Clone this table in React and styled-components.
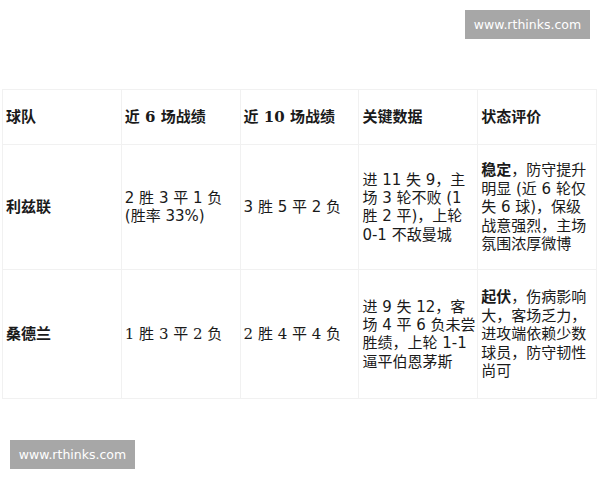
import React from "react";
import styled, { createGlobalStyle } from "styled-components";

const Global = createGlobalStyle`
  html, body { margin: 0; padding: 0; background: #fff; }
  body {
    width: 600px; height: 480px; overflow: hidden;
    font-family: "DejaVu Sans", "Noto Sans CJK SC", sans-serif;
    color: #1a1a1a;
  }
`;

const Page = styled.div`
  position: relative;
  width: 600px;
  height: 480px;
  padding: 89px 0 0 2px;
  box-sizing: border-box;
`;

const Table = styled.table`
  width: 595px;
  table-layout: fixed;
  border-collapse: collapse;
  font-size: 15px;
  line-height: 18.4px;
`;

const HeadCell = styled.th`
  text-align: left;
  font-weight: 700;
  font-family: "DejaVu Serif", "Noto Sans CJK SC", serif;
  padding: 18px 1px 18px 3px;
  height: 18px;
  border: 1px solid #f1f1f1;
  vertical-align: middle;
`;

const Cell = styled.td`
  padding: 16px 0 16px 3px;
  border: 1px solid #f1f1f1;
  vertical-align: middle;
  font-family: ${p => p.$serif
    ? `"DejaVu Serif", "Noto Sans CJK SC", serif`
    : `"DejaVu Sans", "Noto Sans CJK SC", sans-serif`};
  font-weight: ${p => (p.$bold ? 700 : 400)};
  height: ${p => p.$h || "auto"};
`;

const Strong = styled.b`
  font-weight: 700;
`;

const NoBreak = styled.span`
  white-space: nowrap;
`;

const Watermark = styled.div`
  position: absolute;
  width: 125px;
  height: 29px;
  background: #a7a7a7;
  color: #fff;
  font-family: "DejaVu Sans", sans-serif;
  font-size: 12.5px;
  display: flex;
  align-items: center;
  justify-content: center;
  ${p => (p.$top ? "top: 10px; left: 465px;" : "top: 440px; left: 10px;")}
`;

export default function App() {
  return (
    <Page>
      <Global />
      <Table>
        <thead>
          <tr>
            <HeadCell>球队</HeadCell>
            <HeadCell>近 6 场战绩</HeadCell>
            <HeadCell>近 10 场战绩</HeadCell>
            <HeadCell>关键数据</HeadCell>
            <HeadCell>状态评价</HeadCell>
          </tr>
        </thead>
        <tbody>
          <tr>
            <Cell $bold>利兹联</Cell>
            <Cell>2 胜 3 平 1 负 (胜率 33%)</Cell>
            <Cell>3 胜 5 平 2 负</Cell>
            <Cell>进 11 失 9，主场 3 轮不败 (1 胜 2 平)，上轮 0-1 不敌曼城</Cell>
            <Cell>
              <Strong>稳定</Strong>，防守提升明显 (近 6 轮仅失 6 球)，保级战意强烈，主场氛围浓厚微博
            </Cell>
          </tr>
          <tr>
            <Cell $bold $h="96px">桑德兰</Cell>
            <Cell $serif>1 胜 3 平 2 负</Cell>
            <Cell $serif>2 胜 4 平 4 负</Cell>
            <Cell>
              进 9 失 12，客场 4 平 6 负未尝胜绩，上轮 <NoBreak>1-1</NoBreak> 逼平伯恩茅斯
            </Cell>
            <Cell>
              <Strong>起伏</Strong>，伤病影响大，客场乏力，进攻端依赖少数球员，防守韧性尚可
            </Cell>
          </tr>
        </tbody>
      </Table>
      <Watermark $top>www.rthinks.com</Watermark>
      <Watermark>www.rthinks.com</Watermark>
    </Page>
  );
}
